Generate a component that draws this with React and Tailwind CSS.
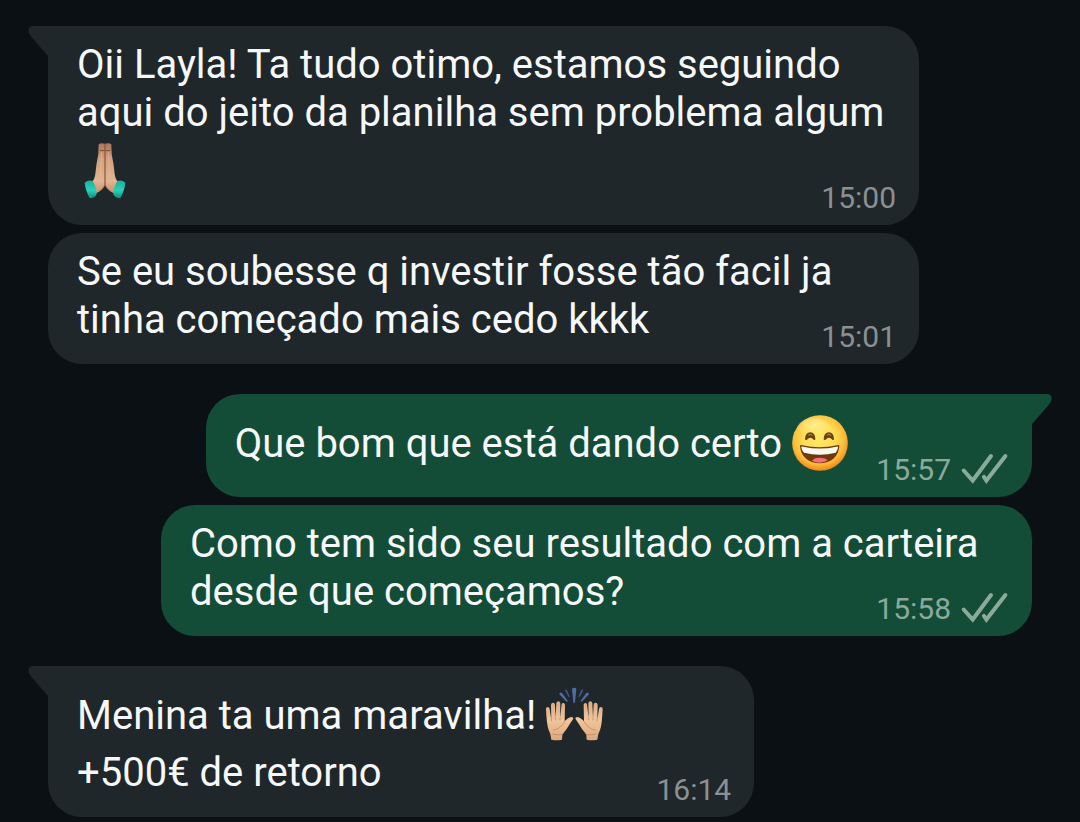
import React from 'react';

const emojiClass = 'inline-block h-14 w-14 my-[6px] align-[-20px] overflow-visible';

const PrayEmoji = () => (
  <svg className={emojiClass} viewBox="24 39 168 168" role="img" aria-label="mãos juntas">
    <defs>
      <linearGradient id="praySkin" x1="0" y1="0" x2="0" y2="1">
        <stop offset="0" stopColor="#a87558" />
        <stop offset="0.3" stopColor="#d3a07d" />
        <stop offset="0.75" stopColor="#e2b592" />
        <stop offset="1" stopColor="#c8906d" />
      </linearGradient>
      <linearGradient id="prayCuff" x1="0" y1="0" x2="0" y2="1">
        <stop offset="0" stopColor="#17b29b" />
        <stop offset="0.55" stopColor="#2ccfb7" />
        <stop offset="1" stopColor="#0d8e7c" />
      </linearGradient>
    </defs>
    <path
      d="M89 43 Q96 37 108 41 L108 163 Q103 182 78 191 L69 155 Q77 148 79 132 Q82 100 88 72 Z"
      fill="url(#praySkin)"
    />
    <path
      d="M127 43 Q120 37 108 41 L108 163 Q113 182 138 191 L147 155 Q139 148 137 132 Q134 100 128 72 Z"
      fill="url(#praySkin)"
    />
    <path d="M108 42 V164 M92 59 Q99 64 106 61 M124 59 Q117 64 110 61" fill="none" stroke="#87553d" strokeWidth="3.5" />
    <path d="M98 66 L94 140 M118 66 L122 140" fill="none" stroke="#efc5a2" strokeWidth="3" opacity="0.4" />
    <path d="M90 184 Q104 177 108 163 Q112 177 126 184" fill="none" stroke="#a8694d" strokeWidth="3" />
    <path d="M47 158 Q58 148 71 153 Q83 171 83 192 Q77 205 62 205 Q49 180 47 158Z" fill="url(#prayCuff)" />
    <path d="M169 158 Q158 148 145 153 Q133 171 133 192 Q139 205 154 205 Q167 180 169 158Z" fill="url(#prayCuff)" />
  </svg>
);

const GrinEmoji = () => (
  <svg className={emojiClass} viewBox="42 45 168 168" role="img" aria-label="rosto sorridente">
    <defs>
      <radialGradient id="grinFace" cx="0.48" cy="0.42" r="0.57">
        <stop offset="0" stopColor="#ffe864" />
        <stop offset="0.5" stopColor="#ffdd56" />
        <stop offset="0.8" stopColor="#fdbd39" />
        <stop offset="1" stopColor="#ee8b1c" />
      </radialGradient>
      <radialGradient id="grinShine" cx="0.5" cy="0.3" r="0.6">
        <stop offset="0" stopColor="#fff3a4" stopOpacity="0.7" />
        <stop offset="1" stopColor="#fff3a4" stopOpacity="0" />
      </radialGradient>
    </defs>
    <circle cx="126" cy="129" r="83.5" fill="url(#grinFace)" />
    <ellipse cx="108" cy="85" rx="52" ry="30" fill="url(#grinShine)" />
    <path
      d="M81 117 Q82 97 97 97 Q111 97 112 117 Q112 122 107 119 Q97 108 87 119 Q82 122 81 117Z"
      fill="#6b4213"
    />
    <path
      d="M137 117 Q138 97 153 97 Q167 97 168 117 Q168 122 163 119 Q153 108 143 119 Q138 122 137 117Z"
      fill="#6b4213"
    />
    <path d="M91 106 Q97 100 103 106 M147 106 Q153 100 159 106" fill="none" stroke="#b09162" strokeWidth="3" />
    <path
      d="M66 138 Q66 134 73 136 Q124 148 177 136 Q184 134 184 138 C182 170 158 190 125 190 C91 190 68 169 66 138Z"
      fill="#713909"
    />
    <path
      d="M70 142 Q70 138 76 140 Q125 151 175 140 Q181 138 180 142 Q179 153 173 158 Q126 170 78 158 Q71 153 70 142Z"
      fill="#fffaf0"
    />
    <path d="M102 182 Q108 173 125 173 Q143 173 149 181 Q139 188 125 188 Q111 188 102 182Z" fill="#f0727c" />
  </svg>
);

const RaisedHandsEmoji = () => (
  <svg className={emojiClass} viewBox="26 36 168 168" role="img" aria-label="mãos para cima">
    <defs>
      <linearGradient id="handSkin" x1="0" y1="0" x2="0" y2="1">
        <stop offset="0" stopColor="#d9ab84" />
        <stop offset="0.5" stopColor="#f0c49c" />
        <stop offset="1" stopColor="#dda77c" />
      </linearGradient>
      <path
        id="raisedHand"
        d="M42 194 Q41 177 34 165 Q28 150 26 102 Q26 96 31 96 Q36 96 37 102 L42 134 L41 89 Q42 83 47 83 Q52 83 53 89 L55 129 L57 84 Q58 79 63 79 Q68 79 69 85 L68 130 L73 88 Q75 83 79 84 Q84 86 83 92 L82 139 Q93 127 101 126 Q110 126 107 133 Q98 146 88 162 Q79 173 75 179 L74 194 Q58 197 42 194Z"
      />
    </defs>
    <g fill="#4f6cac">
      <path d="M104 42 Q105 38 110 38 Q116 38 117 42 L113 82 Q110 88 108 82Z" />
      <path d="M83 45 Q86 42 89 46 L97 64 Q97 68 93 65Z" opacity="0.7" />
      <path d="M138 45 Q135 42 131 46 L124 64 Q124 68 128 65Z" opacity="0.7" />
      <path d="M66 58 Q67 50 74 54 L91 77 Q91 82 86 79Z" />
      <path d="M155 58 Q154 50 147 54 L130 77 Q130 82 135 79Z" />
    </g>
    <use href="#raisedHand" fill="url(#handSkin)" />
    <use href="#raisedHand" fill="url(#handSkin)" transform="matrix(-1 0 0 1 222 0)" />
    <g fill="none" stroke="#c18b64" strokeWidth="2.5">
      <path d="M42 132 L43 139 M55 128 V136 M68 129 V136 M47 166 Q64 164 74 151 Q79 144 82 139 M45 177 Q60 181 75 178" />
      <path d="M180 132 L179 139 M167 128 V136 M154 129 V136 M175 166 Q158 164 148 151 Q143 144 140 139 M177 177 Q162 181 147 178" />
    </g>
  </svg>
);

const DoubleCheck = () => (
  <svg className="h-[30px] w-12 overflow-visible" viewBox="0 0 48 30" fill="none" role="img" aria-label="entregue">
    <path
      d="M2.7 15.5 L11.7 25.5 L30 1 M22.9 21.8 L25.4 25.5 L44.4 1"
      stroke="#8aab9c"
      strokeWidth="4"
      strokeLinecap="round"
    />
  </svg>
);

const Tail = ({ sent }) => (
  <svg
    className={sent ? 'absolute top-0 -right-5 h-[30px] w-[21px] -scale-x-100' : 'absolute top-0 -left-5 h-[30px] w-[21px]'}
    viewBox="0 0 21 30"
    aria-hidden="true"
  >
    <path d="M21 0 H5 Q1 0 0.4 4 Q0 7 2.5 10 L20 30 H21Z" fill={sent ? '#144d37' : '#1f272a'} />
  </svg>
);

const Bubble = ({ message }) => {
  const { sent, tail, reserve, time, content } = message;

  return (
    <li
      className={[
        'relative max-w-[871px] rounded-[34px] pt-[15px] pb-5 pl-[29px]',
        sent ? 'self-end bg-[#144d37]' : 'self-start bg-[#1f272a]',
        tail && (sent ? 'rounded-tr-none' : 'rounded-tl-none'),
        reserve || 'pr-[29px]',
      ].filter(Boolean).join(' ')}
    >
      {tail && <Tail sent={sent} />}
      <p className="text-[40px] leading-[48px] text-[#f5f7f8]">{content}</p>
      <div
        className={
          sent
            ? 'absolute right-[23px] bottom-3 flex items-center gap-2.5 text-[#8aab9c]'
            : 'absolute right-[23px] bottom-3 flex items-center text-[#8b9093]'
        }
      >
        <time className="text-[30px] leading-[30px]">{time}</time>
        {sent && <DoubleCheck />}
      </div>
    </li>
  );
};

const groups = [
  [
    {
      time: '15:00',
      tail: true,
      content: <>Oii Layla! Ta tudo otimo, estamos seguindo aqui do jeito da planilha sem problema algum <PrayEmoji /></>,
    },
    {
      time: '15:01',
      content: 'Se eu soubesse q investir fosse tão facil ja tinha começado mais cedo kkkk',
    },
  ],
  [
    {
      time: '15:57',
      sent: true,
      tail: true,
      reserve: 'pr-[184px]',
      content: <>Que bom que está dando certo <GrinEmoji /></>,
    },
    {
      time: '15:58',
      sent: true,
      content: 'Como tem sido seu resultado com a carteira desde que começamos?',
    },
  ],
  [
    {
      time: '16:14',
      tail: true,
      reserve: 'pr-[152px]',
      content: <>Menina ta uma maravilha! <RaisedHandsEmoji /><br />+500€ de retorno</>,
    },
  ],
];

const App = () => {
  return (
    <main className="min-h-screen bg-[#0b1014] pt-[26px] pb-1 px-12 font-[Roboto,sans-serif]">
      <div className="flex flex-col gap-[30px]">
        {groups.map((group) => (
          <ul key={group[0].time} className="flex flex-col gap-2">
            {group.map((message) => (
              <Bubble key={message.time} message={message} />
            ))}
          </ul>
        ))}
      </div>
    </main>
  );
};

export default App;
